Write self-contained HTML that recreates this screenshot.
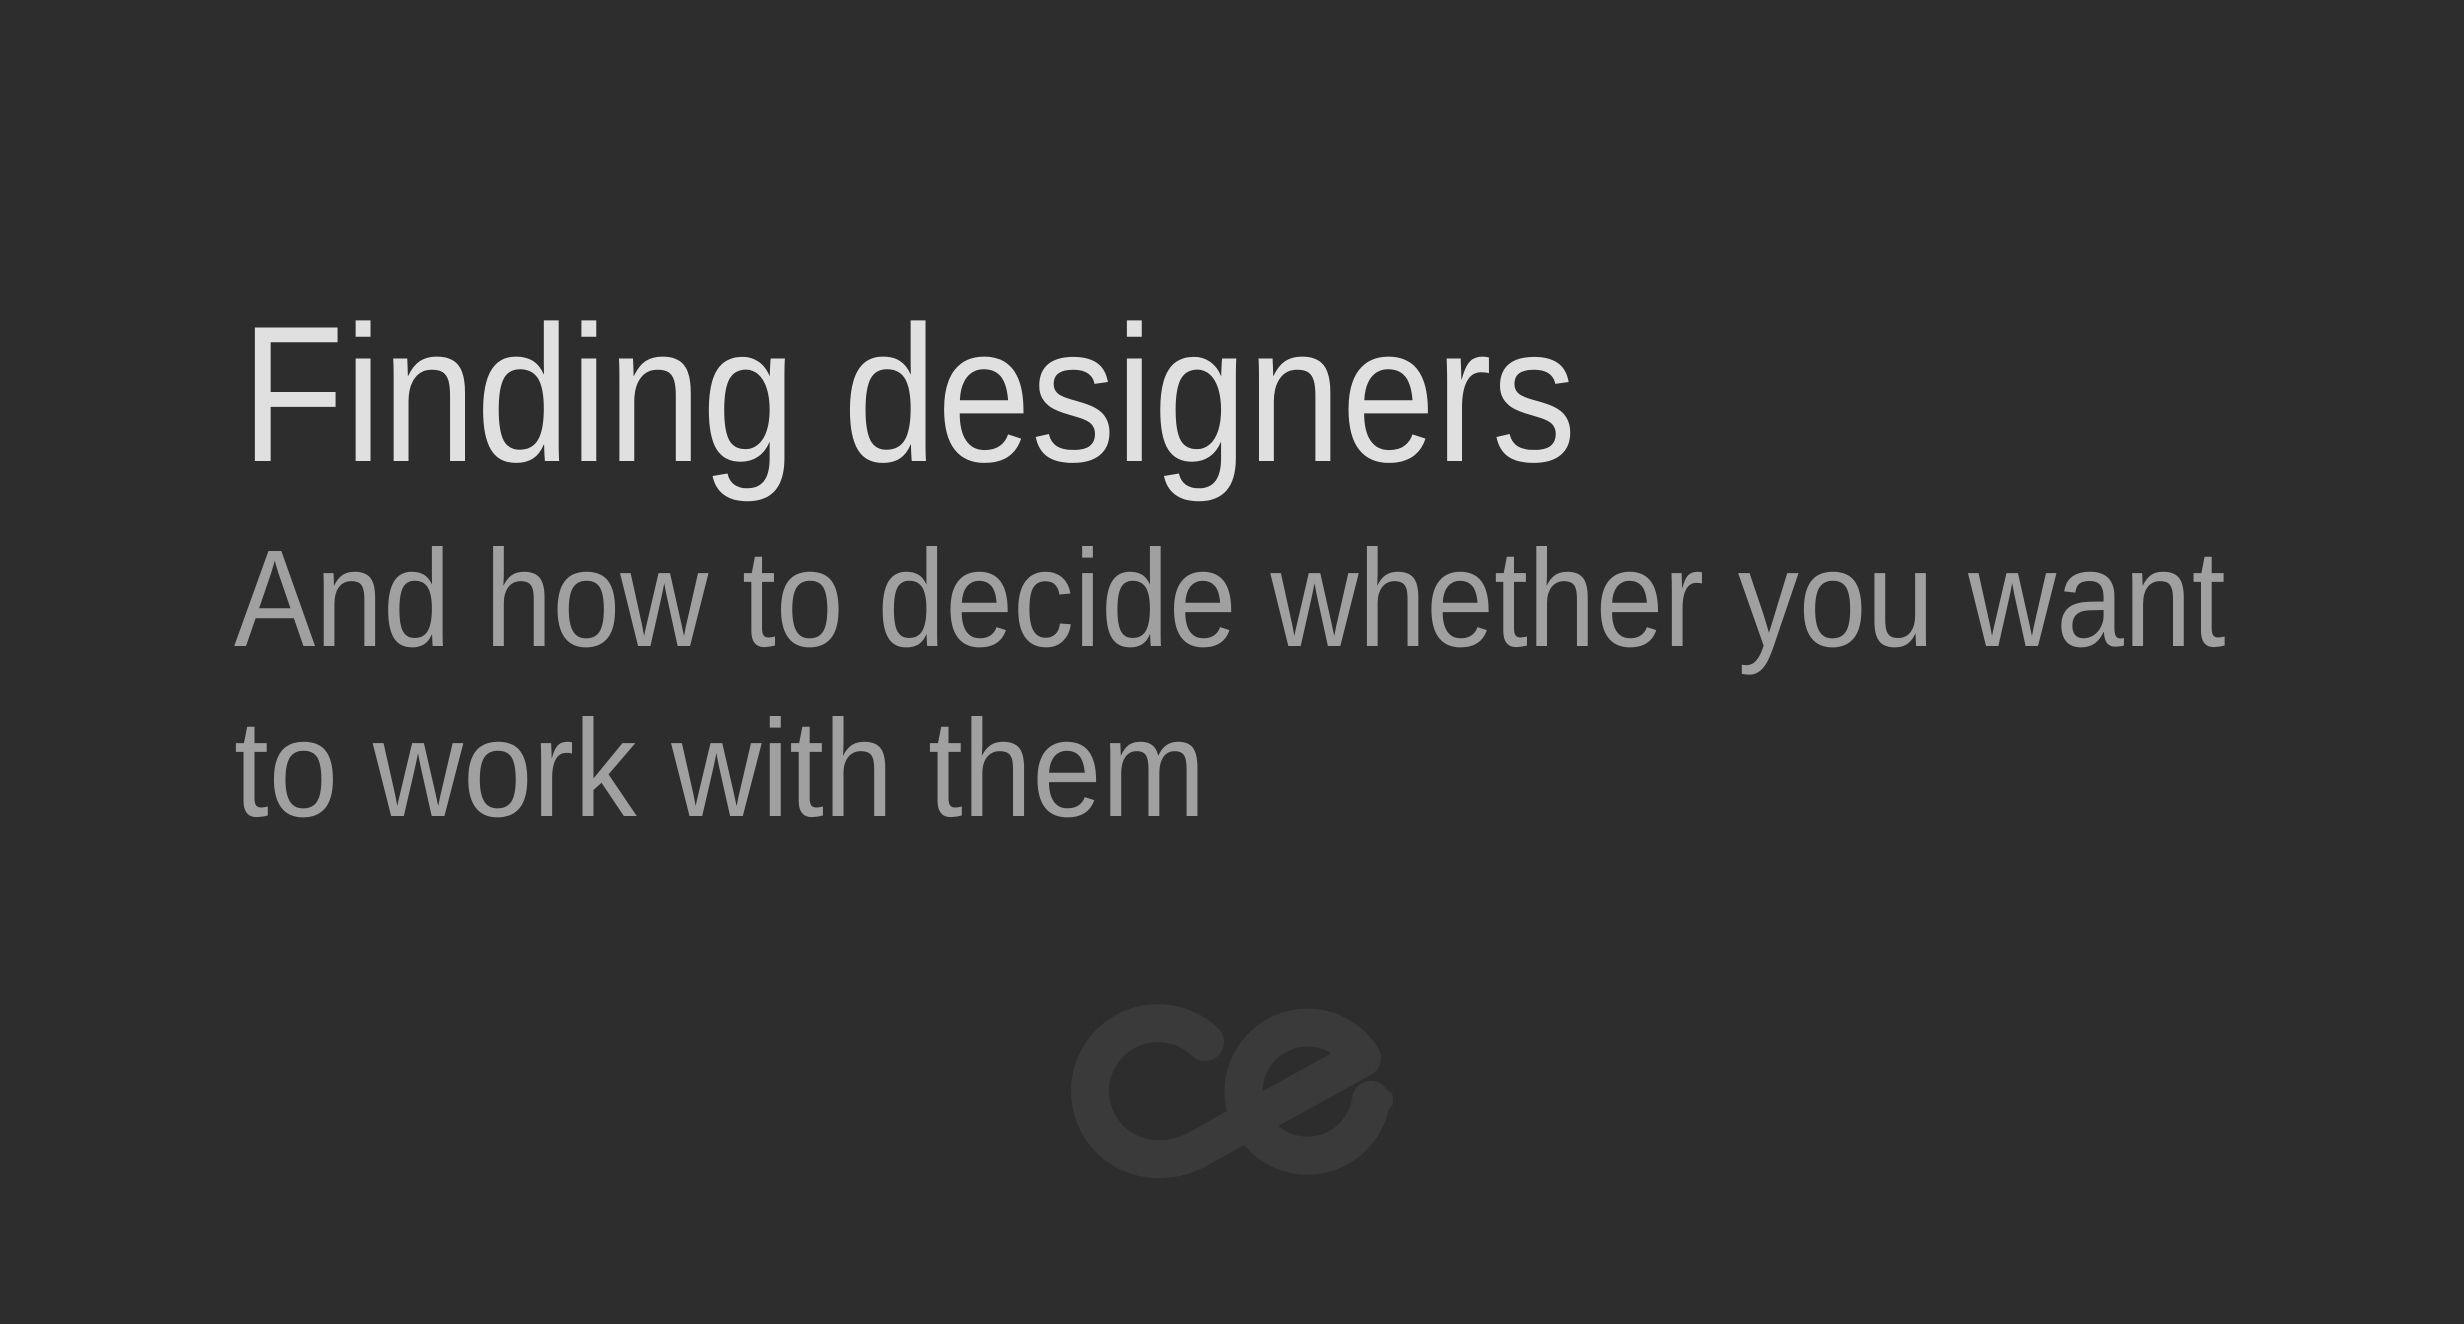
<!DOCTYPE html>
<html><head><meta charset="utf-8"><style>
html,body{margin:0;padding:0}
body{width:2464px;height:1324px;background:#2d2d2d;position:relative;overflow:hidden;font-family:"Liberation Sans",sans-serif}
.t{position:absolute;white-space:nowrap;line-height:1;transform-origin:0 0}
</style></head><body>
<div class="t" style="left:241px;top:298px;font-size:194px;color:#e0e0e0;transform:scaleX(0.872)">Finding designers</div>
<div class="t" style="left:234px;top:530px;font-size:138px;color:#a0a0a0;transform:scaleX(0.883)">And how to decide whether you want</div>
<div class="t" style="left:234px;top:700px;font-size:138px;color:#a0a0a0;transform:scaleX(0.905)">to work with them</div>
<svg style="position:absolute;left:0;top:0" width="2464" height="1324">
<g fill="none" stroke="#3a3a3a" stroke-width="38" stroke-linecap="round" stroke-linejoin="round">
<path d="M1205 1042 A68 68 0 1 0 1162 1159 Q1180 1159 1200 1148 L1250 1120"/>
<path d="M1250 1120 L1362 1058 A64 64 0 1 0 1371 1100"/>
</g>
<rect x="1355" y="1090" width="38" height="20" rx="8" fill="#3a3a3a"/>
</svg>
</body></html>
